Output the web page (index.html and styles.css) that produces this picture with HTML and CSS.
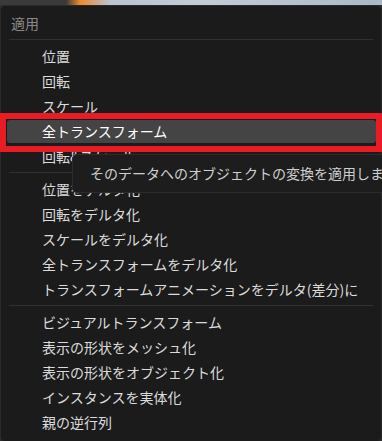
FILE: index.html
```html
<!DOCTYPE html>
<html lang="ja">
  <head>
    <meta charset="UTF-8" />
    <title>適用</title>
    <link rel="stylesheet" href="styles.css">
  </head>
  <body>
    <div class="backdrop"></div>

    <div class="menu">
      <div class="menu-title">適用</div>
      <div class="sep"></div>

      <div class="item">位置</div>
      <div class="item">回転</div>
      <div class="item">スケール</div>
      <div class="item active">全トランスフォーム</div>
      <div class="item">回転&amp;スケール</div>
      <div class="sep"></div>

      <div class="item">位置をデルタ化</div>
      <div class="item">回転をデルタ化</div>
      <div class="item">スケールをデルタ化</div>
      <div class="item">全トランスフォームをデルタ化</div>
      <div class="item">トランスフォームアニメーションをデルタ(差分)に</div>
      <div class="sep"></div>

      <div class="item">ビジュアルトランスフォーム</div>
      <div class="item">表示の形状をメッシュ化</div>
      <div class="item">表示の形状をオブジェクト化</div>
      <div class="item">インスタンスを実体化</div>
      <div class="item">親の逆行列</div>

      <!-- hover tooltip, cut off by the window edge -->
      <div class="tooltip">そのデータへのオブジェクトの変換を適用します</div>
    </div>

    <!-- annotation frame -->
    <div class="mark"></div>
  </body>
</html>
```

FILE: styles.css
```css
body {
  margin: 0;
  background-color: #2f2f2f;
  font-family: "Noto Sans CJK JP", "Noto Sans", sans-serif;
  font-size: 14px;
  overflow: hidden;
}
.backdrop {
  height: 5px;
  background: linear-gradient(90deg, #3a3a3a 0, #3a3a3a 66px, #f08a2c 80px, #d9a070 92px, #b9c4cf 110px, #c3ccd5 200px, #aab9c8 382px);
}
.menu {
  position: relative;
  height: 430px;
  padding-top: 5px;
  background-color: #1b1b1b;
  border: 1px solid #2a2a2a;
  border-radius: 5px;
}
.menu-title {
  height: 25px;
  line-height: 25px;
  padding-left: 10px;
  color: #8a8a8a;
}
.sep {
  height: 8px;
  margin: 0 8px 0 8px;
  background: linear-gradient(#1b1b1b 3px, #303030 3px, #303030 4px, #1b1b1b 4px);
}
.item {
  height: 25px;
  line-height: 25px;
  margin: 0 5px 0 6px;
  padding-left: 35px;
  color: #dcdcdc;
  white-space: nowrap;
}
.active {
  height: 23px;
  line-height: 23px;
  margin-top: 1px;
  margin-bottom: 1px;
  background-color: #444444;
  border-radius: 3px;
  color: #ffffff;
}
.tooltip {
  position: absolute;
  left: 71px;
  top: 148px;
  width: 310px;
  height: 39px;
  box-sizing: border-box;
  line-height: 37px;
  padding-left: 17px;
  background-color: #1d1d1d;
  border: 1px solid #2c2c2c;
  border-right: none;
  border-radius: 5px 0 0 5px;
  color: #cfcfcf;
  white-space: nowrap;
  overflow: hidden;
}
.mark {
  position: absolute;
  left: 0;
  top: 113px;
  width: 382px;
  height: 39px;
  box-sizing: border-box;
  border: 6px solid #e81c24;
}
```
